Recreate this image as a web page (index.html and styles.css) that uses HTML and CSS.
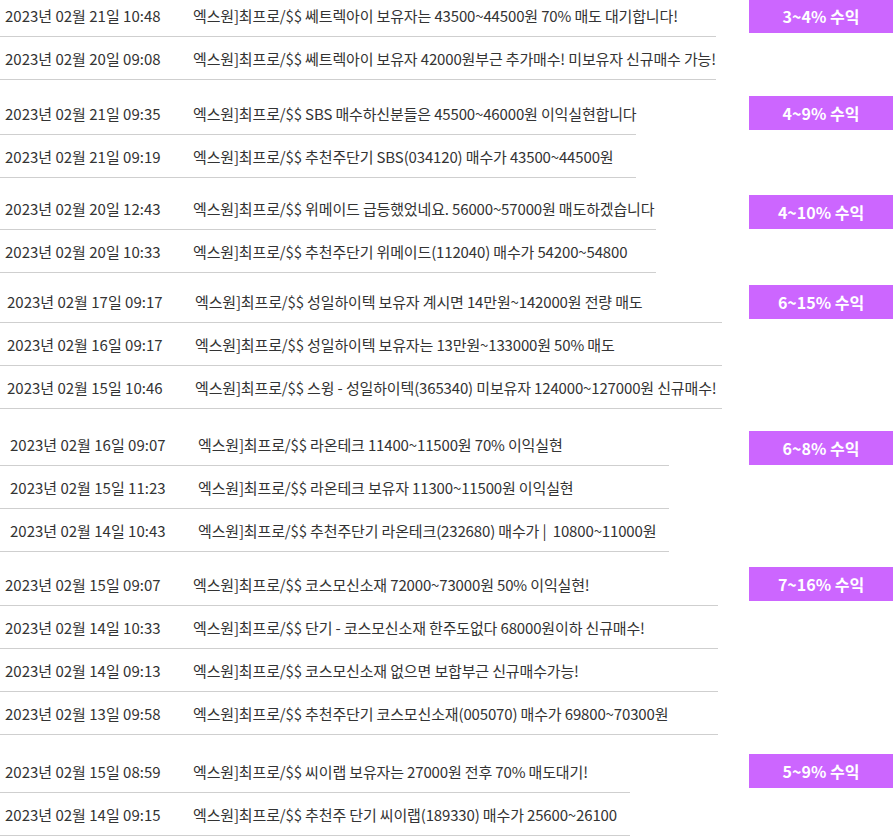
FILE: index.html
```html
<!DOCTYPE html>
<html>
<head>
  <meta charset="utf-8">
  <title>수익 알림</title>
  <link rel="stylesheet" href="styles.css">
</head>
<body>
  <div class="board">

    <div class="group">
      <div class="list w716">
        <div class="row"><span class="date">2023년 02월 21일 10:48</span><span class="msg">엑스원]최프로/$$ 쎄트렉아이 보유자는 43500~44500원 70% 매도 대기합니다!</span></div>
        <div class="row"><span class="date">2023년 02월 20일 09:08</span><span class="msg">엑스원]최프로/$$ 쎄트렉아이 보유자 42000원부근 추가매수! 미보유자 신규매수 가능!</span></div>
      </div>
      <div class="badge">3~4% 수익</div>
    </div>

    <div class="group gap-12 badge-4">
      <div class="list w636">
        <div class="row"><span class="date">2023년 02월 21일 09:35</span><span class="msg">엑스원]최프로/$$ SBS 매수하신분들은 45500~46000원 이익실현합니다</span></div>
        <div class="row"><span class="date">2023년 02월 21일 09:19</span><span class="msg">엑스원]최프로/$$ 추천주단기 SBS(034120) 매수가 43500~44500원</span></div>
      </div>
      <div class="badge">4~9% 수익</div>
    </div>

    <div class="group gap-9 badge-8">
      <div class="list w656">
        <div class="row"><span class="date">2023년 02월 20일 12:43</span><span class="msg">엑스원]최프로/$$ 위메이드 급등했었네요. 56000~57000원 매도하겠습니다</span></div>
        <div class="row"><span class="date">2023년 02월 20일 10:33</span><span class="msg">엑스원]최프로/$$ 추천주단기 위메이드(112040) 매수가 54200~54800</span></div>
      </div>
      <div class="badge">4~10% 수익</div>
    </div>

    <div class="group gap-7 indent-2">
      <div class="list w722">
        <div class="row"><span class="date">2023년 02월 17일 09:17</span><span class="msg">엑스원]최프로/$$ 성일하이텍 보유자 계시면 14만원~142000원 전량 매도</span></div>
        <div class="row"><span class="date">2023년 02월 16일 09:17</span><span class="msg">엑스원]최프로/$$ 성일하이텍 보유자는 13만원~133000원 50% 매도</span></div>
        <div class="row"><span class="date">2023년 02월 15일 10:46</span><span class="msg">엑스원]최프로/$$ 스윙 - 성일하이텍(365340) 미보유자 124000~127000원 신규매수!</span></div>
      </div>
      <div class="badge">6~15% 수익</div>
    </div>

    <div class="group gap-14 badge-8 indent-5">
      <div class="list w669">
        <div class="row"><span class="date">2023년 02월 16일 09:07</span><span class="msg">엑스원]최프로/$$ 라온테크 11400~11500원 70% 이익실현</span></div>
        <div class="row"><span class="date">2023년 02월 15일 11:23</span><span class="msg">엑스원]최프로/$$ 라온테크 보유자 11300~11500원 이익실현</span></div>
        <div class="row"><span class="date">2023년 02월 14일 10:43</span><span class="msg">엑스원]최프로/$$ 추천주단기 라온테크(232680) 매수가 |&nbsp; 10800~11000원</span></div>
      </div>
      <div class="badge">6~8% 수익</div>
    </div>

    <div class="group gap-11 badge-4">
      <div class="list w718">
        <div class="row"><span class="date">2023년 02월 15일 09:07</span><span class="msg">엑스원]최프로/$$ 코스모신소재 72000~73000원 50% 이익실현!</span></div>
        <div class="row"><span class="date">2023년 02월 14일 10:33</span><span class="msg">엑스원]최프로/$$ 단기 - 코스모신소재 한주도없다 68000원이하 신규매수!</span></div>
        <div class="row"><span class="date">2023년 02월 14일 09:13</span><span class="msg">엑스원]최프로/$$ 코스모신소재 없으면 보합부근 신규매수가능!</span></div>
        <div class="row"><span class="date">2023년 02월 13일 09:58</span><span class="msg">엑스원]최프로/$$ 추천주단기 코스모신소재(005070) 매수가 69800~70300원</span></div>
      </div>
      <div class="badge">7~16% 수익</div>
    </div>

    <div class="group gap-15 badge-4">
      <div class="list w630">
        <div class="row"><span class="date">2023년 02월 15일 08:59</span><span class="msg">엑스원]최프로/$$ 씨이랩 보유자는 27000원 전후 70% 매도대기!</span></div>
        <div class="row"><span class="date">2023년 02월 14일 09:15</span><span class="msg">엑스원]최프로/$$ 추천주 단기 씨이랩(189330) 매수가 25600~26100</span></div>
      </div>
      <div class="badge">5~9% 수익</div>
    </div>

  </div>
</body>
</html>
```

FILE: styles.css
```css
body {
  margin: 0;
  background-color: #fff;
  font-family: "Noto Sans CJK KR", "Noto Sans", sans-serif;
  font-size: 15px;
  color: #333;
}
.board {
  width: 893px;
  margin-top: -6px;
}
.group {
  display: grid;
  grid-template-columns: 1fr 144px;
  align-items: start;
}
.gap-7 { margin-top: 7px; }
.gap-9 { margin-top: 9px; }
.gap-11 { margin-top: 11px; }
.gap-12 { margin-top: 12px; }
.gap-14 { margin-top: 14px; }
.gap-15 { margin-top: 15px; }

/* table widths as they come out on the live page */
.list {
  display: flex;
  flex-direction: column;
  justify-self: start;
}
.w630 { width: 630px; }
.w636 { width: 636px; }
.w656 { width: 656px; }
.w669 { width: 669px; }
.w716 { width: 716px; }
.w718 { width: 718px; }
.w722 { width: 722px; }

.row {
  display: flex;
  align-items: center;
  height: 42px;
  border-bottom: 1px solid #cfcfcf;
  white-space: nowrap;
}
.indent-2 .row { padding-left: 2px; }
.indent-5 .row { padding-left: 5px; }
.date {
  box-sizing: border-box;
  width: 193px;
  padding-left: 5px;
  flex-shrink: 0;
}
.msg {
  letter-spacing: -0.15px;
}
.badge {
  margin-top: 5px;
  height: 34px;
  display: flex;
  align-items: center;
  justify-content: center;
  background-color: #cc66ff;
  color: #fff;
  font-size: 16px;
  font-weight: bold;
}
.badge-4 .badge { margin-top: 4px; }
.badge-8 .badge { margin-top: 8px; }
```
